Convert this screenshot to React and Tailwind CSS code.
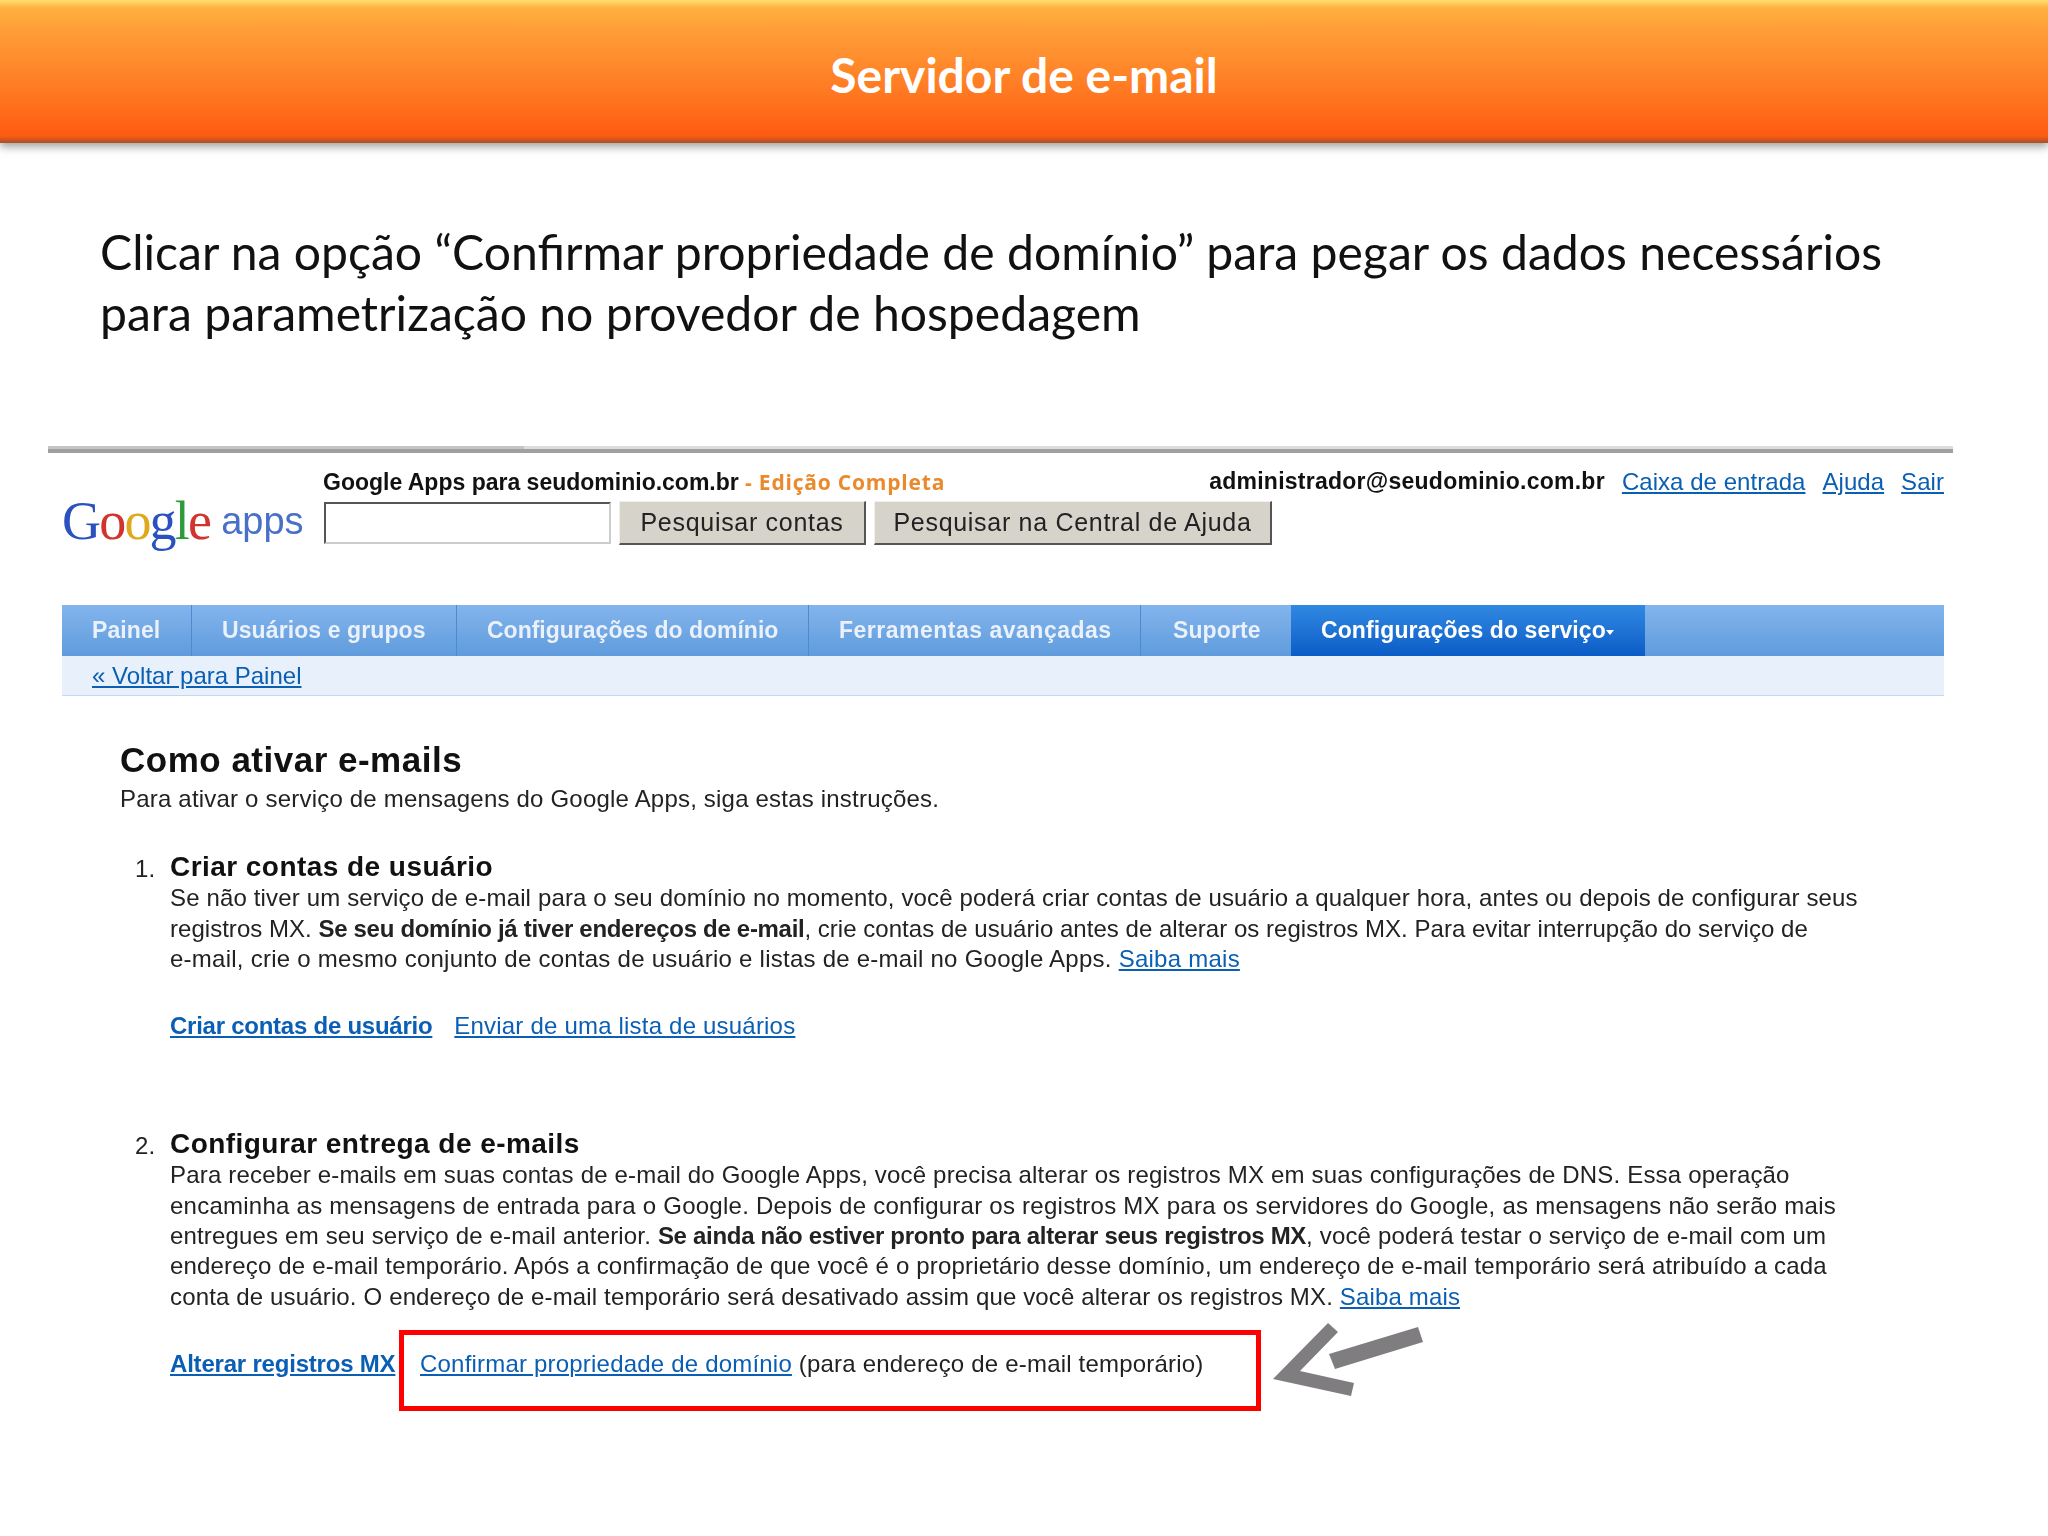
const navItems = [
  { label: 'Painel', w: 'w-[130px] pl-[30px]' },
  { label: 'Usuários e grupos', w: 'w-[265px] pl-[30px]' },
  { label: 'Configurações do domínio', w: 'w-[352px] pl-[30px] tracking-[0px]' },
  { label: 'Ferramentas avançadas', w: 'w-[332px] pl-[30px] tracking-[0.5px]' },
  { label: 'Suporte', w: 'w-[150px] pl-[32px]', noBorder: true },
];

function Link({ children, className = '' }) {
  return <a className={`text-[#0a5fb4] underline cursor-pointer ${className}`}>{children}</a>;
}

// each line of the copy is tuned on its own so the line ends land where they should
function Line({ children, className = '' }) {
  return <div className={`whitespace-nowrap ${className}`}>{children}</div>;
}

function GoogleLogo() {
  return (
    <div className="w-[262px] shrink-0 flex items-baseline pt-[38px] h-[100px]">
      <span className="font-['Liberation_Serif',serif] text-[54px] leading-[60px] tracking-[-1.8px]">
        <span className="text-[#2a52be]">G</span>
        <span className="text-[#d0342c]">o</span>
        <span className="text-[#e0a91c]">o</span>
        <span className="text-[#2a52be]">g</span>
        <span className="text-[#2f9a3a]">l</span>
        <span className="text-[#d0342c]">e</span>
      </span>
      <span className="ml-[11px] text-[#4a6fc8] text-[38px] leading-[60px] -translate-y-[5px]">apps</span>
    </div>
  );
}

function GrayButton({ children, className = '' }) {
  return (
    <button className={`h-[44px] bg-[#d6d3cb] border-t border-l border-[#f2f0ea] border-r-2 border-b-2 border-r-[#555] border-b-[#555] text-[25px] text-[#222] tracking-[0.7px] ${className}`}>
      {children}
    </button>
  );
}

function TopBar() {
  return (
    <div className="flex pl-[14px] pr-[9px]">
      <GoogleLogo />
      <div className="flex-1">
        <div className="flex justify-between items-center h-[48px] pt-[10px]">
          <div className="text-[23px] font-bold text-[#111] -ml-px">
            Google Apps para seudominio.com.br
            <span className="text-[#ea8a2c] text-[21px] tracking-[0.8px] font-['Open_Sans',sans-serif]"> - Edição Completa</span>
          </div>
          <div className="flex gap-[17px] text-[24px] tracking-[0.05px]">
            <span className="font-bold text-[23px] tracking-[0.25px] text-[#111]">administrador@seudominio.com.br</span>
            <Link>Caixa de entrada</Link>
            <Link>Ajuda</Link>
            <Link>Sair</Link>
          </div>
        </div>
        <div className="flex gap-[8px] items-center">
          <input className="w-[287px] h-[42px] bg-white border-2 border-t-[#555] border-l-[#555] border-r-[#ccc] border-b-[#ccc]" />
          <GrayButton className="w-[247px]">Pesquisar contas</GrayButton>
          <GrayButton className="w-[398px]">Pesquisar na Central de Ajuda</GrayButton>
        </div>
      </div>
    </div>
  );
}

function NavBar() {
  return (
    <div className="ml-[14px] mr-[9px] mt-[52px]">
      <div className="flex h-[51px] bg-gradient-to-b from-[#83b5ed] to-[#5f9bdc] text-[23px] tracking-[0.1px] font-bold text-[#eaf1fa]">
        {navItems.map((item) => (
          <div key={item.label} className={`${item.w} flex items-center ${item.noBorder ? '' : 'border-r border-[#4f8bcc]'}`}>
            {item.label}
          </div>
        ))}
        <div className="w-[354px] flex items-center pl-[30px] bg-gradient-to-b from-[#3189e2] to-[#0a5cc6] text-white">
          Configurações do serviço
          <svg width="8" height="5" viewBox="0 0 8 5" className="mt-[3px]"><path d="M0 0h8L4 5z" fill="#fff" /></svg>
        </div>
      </div>
      <div className="h-[40px] bg-[#e8f1fb] border-b border-[#c3d9f2] flex items-center pl-[30px] text-[24px]">
        <Link>« Voltar para Painel</Link>
      </div>
    </div>
  );
}

function Step({ number, title, children }) {
  return (
    <div className="flex">
      <div className="w-[50px] pl-[15px] text-[24px] leading-[30.3px] text-[#222] pt-[2px]">{number}.</div>
      <div className="flex-1">
        <h3 className="text-[28px] font-bold leading-[30px] tracking-[0.45px] text-[#111] mb-[1px]">{title}</h3>
        {children}
      </div>
    </div>
  );
}

function Content() {
  return (
    <div className="pl-[72px] pt-[45px] text-[#222] text-[24px] tracking-[0.13px] leading-[30.3px]">
      <h2 className="text-[35px] font-bold leading-[38px] tracking-[0.5px] text-[#111]">Como ativar e-mails</h2>
      <p className="mt-[5px] tracking-[0.2px]">Para ativar o serviço de mensagens do Google Apps, siga estas instruções.</p>

      <div className="mt-[38px]">
        <Step number="1" title="Criar contas de usuário">
          <Line className="tracking-[0.15px]">Se não tiver um serviço de e-mail para o seu domínio no momento, você poderá criar contas de usuário a qualquer hora, antes ou depois de configurar seus</Line>
          <Line className="tracking-[0.03px]">registros MX. <b className="tracking-[-0.3px]">Se seu domínio já tiver endereços de e-mail</b>, crie contas de usuário antes de alterar os registros MX. Para evitar interrupção do serviço de</Line>
          <Line className="tracking-[0.25px]">e-mail, crie o mesmo conjunto de contas de usuário e listas de e-mail no Google Apps. <Link>Saiba mais</Link></Line>
          <div className="flex gap-[22px] mt-[37px] tracking-[0.2px]">
            <Link className="font-bold tracking-[-0.25px]">Criar contas de usuário</Link>
            <Link>Enviar de uma lista de usuários</Link>
          </div>
        </Step>
      </div>

      <div className="mt-[88px]">
        <Step number="2" title="Configurar entrega de e-mails">
          <Line className="tracking-[0.18px]">Para receber e-mails em suas contas de e-mail do Google Apps, você precisa alterar os registros MX em suas configurações de DNS. Essa operação</Line>
          <Line className="tracking-[0.25px]">encaminha as mensagens de entrada para o Google. Depois de configurar os registros MX para os servidores do Google, as mensagens não serão mais</Line>
          <Line className="tracking-[0.17px]">entregues em seu serviço de e-mail anterior. <b className="tracking-[-0.3px]">Se ainda não estiver pronto para alterar seus registros MX</b>, você poderá testar o serviço de e-mail com um</Line>
          <Line className="tracking-[0.17px]">endereço de e-mail temporário. Após a confirmação de que você é o proprietário desse domínio, um endereço de e-mail temporário será atribuído a cada</Line>
          <Line className="tracking-[0.15px]">conta de usuário. O endereço de e-mail temporário será desativado assim que você alterar os registros MX. <Link>Saiba mais</Link></Line>
          <div className="relative flex items-start mt-[18px] tracking-[0.2px]">
            <Link className="font-bold pt-[19px] leading-[30px] w-[229px] whitespace-nowrap tracking-[-0.2px]">Alterar registros MX</Link>
            <div className="w-[862px] h-[81px] border-[5px] border-[#f00] pl-[16px] pt-[14px] leading-[30px]">
              <Link>Confirmar propriedade de domínio</Link> (para endereço de e-mail temporário)
            </div>
            <svg width="200" height="120" viewBox="0 0 200 120" className="absolute left-[1070px] top-[-30px]">
              <path d="M88 23L98 32L60 71L114 83L111 96L33 79Z" fill="#7f7d80" />
              <path d="M89 54L178 27L183 42L95 69Z" fill="#7f7d80" />
            </svg>
          </div>
        </Step>
      </div>
    </div>
  );
}

export default function App() {
  return (
    <div className="w-[2048px] h-[1536px] bg-white overflow-hidden font-['Liberation_Sans',Arial,sans-serif]">
      <div className="h-[143px] flex items-center justify-center bg-[linear-gradient(to_bottom,#ffe070_0px,#ffb03e_8px,#ff9e38_30px,#ff7a22_90px,#ff5a12_136px,#a8502a_143px)] shadow-[0_4px_8px_rgba(90,90,90,0.55)]">
        <h1 className="font-['Lato',sans-serif] font-bold text-[48px] text-white pt-[6px]">Servidor de e-mail</h1>
      </div>

      <p className="font-['Lato',sans-serif] text-[48.1px] leading-[61px] text-[#111] pl-[100px] pt-[78px] whitespace-nowrap">
        Clicar na opção “Confirmar propriedade de domínio” para pegar os dados necessários<br />
        para parametrização no provedor de hospedagem
      </p>

      <div className="mt-[103px] ml-[48px] w-[1905px] h-[7px] bg-[linear-gradient(to_right,#c4c4c4_25%,#dcdcdc_25%,#dcdcdc)] border-b-[4px] border-[#a0a0a0]" />

      <div className="ml-[48px] w-[1905px] blur-[0.4px]">
        <TopBar />
        <NavBar />
        <Content />
      </div>
    </div>
  );
}
